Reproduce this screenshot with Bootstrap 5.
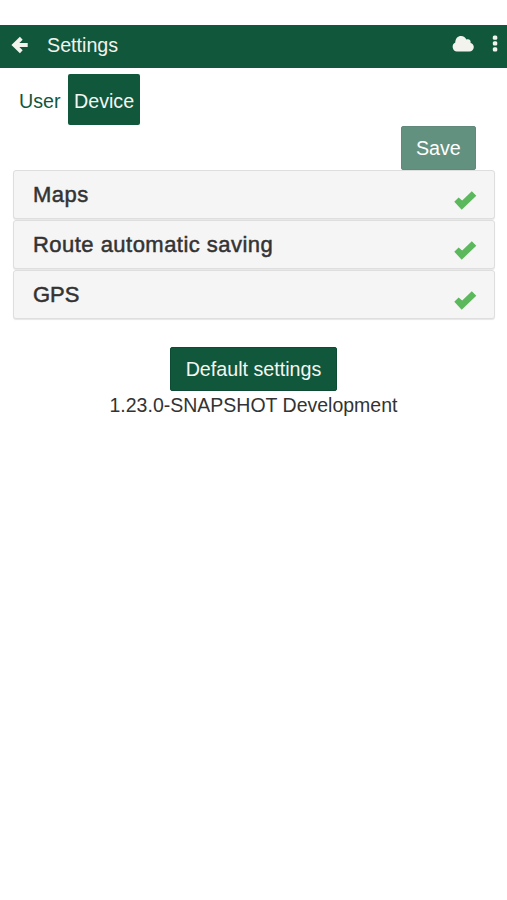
<!DOCTYPE html>
<html lang="en">
<head>
<meta charset="utf-8">
<meta name="viewport" content="width=device-width, initial-scale=1">
<title>Settings</title>
<link href="https://cdn.jsdelivr.net/npm/bootstrap@5.3.0/dist/css/bootstrap.min.css" rel="stylesheet">
<style>
body{font-family:"Liberation Sans",Arial,sans-serif;font-size:19.7px;line-height:28px;color:#333;background:#fff}
.app-bar{margin-top:25px;height:43px;background:#11573c;color:#f3f3ee;padding:0 9px 4px 11px}
.app-title{margin-left:18px}
.menu-dots{margin-left:18px;margin-top:-2px}
.cloud{margin-top:-2px}
.tabs-row{padding:6px 13px 0;height:58px}
.tabs-row .nav-link{height:51px;padding:12px 6px 9px;color:#11573c;border-radius:2px;line-height:30px}
.tabs-row .nav-link.active{background:#11573c;color:#f3f6f2;margin-left:1.4px}
.btn-app{--bs-btn-color:#f3f6f2;--bs-btn-bg:#11573c;--bs-btn-border-color:#0e4b33;--bs-btn-disabled-color:#fff;--bs-btn-disabled-bg:#11573c;--bs-btn-disabled-border-color:#0e4b33;--bs-btn-disabled-opacity:.65;--bs-btn-border-radius:2px;font-size:19.7px;line-height:28px;height:44px;padding:7px 14.7px}
.save-row{padding-right:31px;height:44px}
.save-row .btn-app{padding:7px 14.2px}
.panels{margin:0 12px 0 13px}
.panel-item{height:49px;margin-bottom:1px;border:1px solid #dedede;border-radius:3px;box-shadow:0 1px 1px rgba(0,0,0,.1);background:#f5f5f5;padding:0 17.5px 0 19px}
.panel-item h2{font-size:22px;line-height:30px;font-weight:400;letter-spacing:.47px;-webkit-text-stroke:.5px #333}
.panel-item h2.tight{letter-spacing:0}
.panel-item svg{margin-top:12px}
.footer-block{margin-top:28px}
.version{font-size:19.5px}
</style>
<script src="https://cdn.jsdelivr.net/npm/bootstrap@5.3.0/dist/js/bootstrap.bundle.min.js"></script>
</head>
<body>
<header class="app-bar d-flex align-items-center">
  <svg width="18" height="18" viewBox="0 0 18 18" fill="none" stroke="#f3f3ee" stroke-width="4"><path d="M10.300 2.200 3.300 9l7 6.800M4 9H16.700"/></svg>
  <span class="app-title">Settings</span>
  <svg class="cloud ms-auto" width="22" height="17" viewBox="0 0 22 17" fill="#f3f3ee"><path d="M5 16.500A4.700 4.700 0 0 1 3.300 7.600C3.200 3.600 5.800 1 9 1c2.600 0 4.600 1.500 5.400 3.600 2.500-1.100 4.800.7 4.200 3.300 2 .5 3.200 2.200 3.200 4.100 0 2.600-2 4.500-4.500 4.500z"/></svg>
  <svg class="menu-dots" width="6" height="17" viewBox="0 0 6 17" fill="#f3f3ee"><rect x=".8" y=".4" width="4.500" height="4.300" rx="1.500"/><rect x=".8" y="6.300" width="4.500" height="4.300" rx="1.500"/><rect x=".8" y="12.200" width="4.500" height="4.300" rx="1.500"/></svg>
</header>
<main>
  <ul class="nav nav-pills tabs-row">
    <li class="nav-item"><a class="nav-link" href="#">User</a></li>
    <li class="nav-item"><a class="nav-link active" href="#">Device</a></li>
  </ul>
  <div class="save-row d-flex justify-content-end"><button class="btn btn-app" disabled>Save</button></div>
  <div class="panels">
    <div class="panel-item d-flex justify-content-between align-items-center"><h2 class="mb-0">Maps</h2><svg width="23" height="19" viewBox="0 0 23 19" fill="#5cb85c"><path d="M.3 10.700 4.600 6.400 8.200 9.500 17.800.3 22.300 4.700 7.700 18.700z"/></svg></div>
    <div class="panel-item d-flex justify-content-between align-items-center"><h2 class="mb-0">Route automatic saving</h2><svg width="23" height="19" viewBox="0 0 23 19" fill="#5cb85c"><path d="M.3 10.700 4.600 6.400 8.200 9.500 17.800.3 22.300 4.700 7.700 18.700z"/></svg></div>
    <div class="panel-item d-flex justify-content-between align-items-center"><h2 class="mb-0 tight">GPS</h2><svg width="23" height="19" viewBox="0 0 23 19" fill="#5cb85c"><path d="M.3 10.700 4.600 6.400 8.200 9.500 17.800.3 22.300 4.700 7.700 18.700z"/></svg></div>
  </div>
  <div class="footer-block text-center">
    <button class="btn btn-app">Default settings</button>
    <div class="version">1.23.0-SNAPSHOT Development</div>
  </div>
</main>
</body>
</html>
